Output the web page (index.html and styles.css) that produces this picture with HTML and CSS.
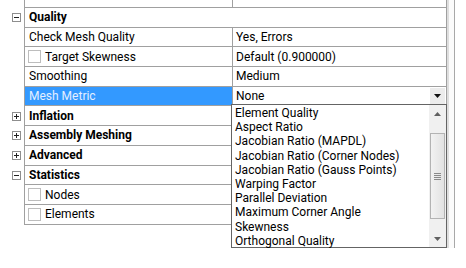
FILE: index.html
```html
<!DOCTYPE html>
<html lang="en">
<head>
  <meta charset="UTF-8" />
  <title>Mesh Details</title>
  <link rel="stylesheet" href="styles.css">
</head>
<body>

  <div class="panel">
    <div class="tree">
      <div class="row stub">
        <div class="gutter"></div>
        <div class="cell label"></div>
        <div class="cell value"></div>
      </div>

      <div class="row head">
        <div class="gutter"><svg class="toggle" width="9" height="9" viewBox="0 0 9 9"><rect x="0.5" y="0.5" width="8" height="8" fill="#fff" stroke="#8e8e8e"/><path d="M2 4.5h5" stroke="#222"/></svg></div>
        <div class="cell title">Quality</div>
      </div>
      <div class="row">
        <div class="gutter"></div>
        <div class="cell label">Check Mesh Quality</div>
        <div class="cell value">Yes, Errors</div>
      </div>
      <div class="row">
        <div class="gutter"></div>
        <div class="cell label"><span class="check"></span>Target Skewness</div>
        <div class="cell value">Default (0.900000)</div>
      </div>
      <div class="row">
        <div class="gutter"></div>
        <div class="cell label">Smoothing</div>
        <div class="cell value">Medium</div>
      </div>
      <div class="row">
        <div class="gutter"></div>
        <div class="cell label selected">Mesh Metric</div>
        <div class="cell value combo">
          <span>None</span>
          <span class="drop-btn"><svg width="7" height="4" viewBox="0 0 7 4"><path d="M0 0h7L3.5 4z" fill="#111"/></svg></span>
        </div>
      </div>

      <div class="row head">
        <div class="gutter"><svg class="toggle" width="9" height="9" viewBox="0 0 9 9"><rect x="0.5" y="0.5" width="8" height="8" fill="#fff" stroke="#8e8e8e"/><path d="M2 4.5h5M4.5 2v5" stroke="#222"/></svg></div>
        <div class="cell title">Inflation</div>
      </div>
      <div class="row head">
        <div class="gutter"><svg class="toggle" width="9" height="9" viewBox="0 0 9 9"><rect x="0.5" y="0.5" width="8" height="8" fill="#fff" stroke="#8e8e8e"/><path d="M2 4.5h5M4.5 2v5" stroke="#222"/></svg></div>
        <div class="cell title">Assembly Meshing</div>
      </div>
      <div class="row head">
        <div class="gutter"><svg class="toggle" width="9" height="9" viewBox="0 0 9 9"><rect x="0.5" y="0.5" width="8" height="8" fill="#fff" stroke="#8e8e8e"/><path d="M2 4.5h5M4.5 2v5" stroke="#222"/></svg></div>
        <div class="cell title">Advanced</div>
      </div>
      <div class="row head">
        <div class="gutter"><svg class="toggle" width="9" height="9" viewBox="0 0 9 9"><rect x="0.5" y="0.5" width="8" height="8" fill="#fff" stroke="#8e8e8e"/><path d="M2 4.5h5" stroke="#222"/></svg></div>
        <div class="cell title">Statistics</div>
      </div>
      <div class="row">
        <div class="gutter"></div>
        <div class="cell label"><span class="check"></span>Nodes</div>
        <div class="cell value"></div>
      </div>
      <div class="row">
        <div class="gutter"></div>
        <div class="cell label"><span class="check"></span>Elements</div>
        <div class="cell value"></div>
      </div>
    </div>

    <div class="edge"></div>

    <!-- open list of the Mesh Metric combo -->
    <div class="dropdown">
      <ul class="options">
        <li>Element Quality</li>
        <li>Aspect Ratio</li>
        <li>Jacobian Ratio (MAPDL)</li>
        <li>Jacobian Ratio (Corner Nodes)</li>
        <li>Jacobian Ratio (Gauss Points)</li>
        <li>Warping Factor</li>
        <li>Parallel Deviation</li>
        <li>Maximum Corner Angle</li>
        <li>Skewness</li>
        <li>Orthogonal Quality</li>
      </ul>
      <div class="scrollbar">
        <div class="sb-btn"><svg width="7" height="4" viewBox="0 0 7 4"><path d="M0 4h7L3.5 0z" fill="#606060"/></svg></div>
        <div class="sb-track">
          <div class="sb-thumb">
            <span></span><span></span><span></span><span></span>
          </div>
        </div>
        <div class="sb-btn"><svg width="7" height="4" viewBox="0 0 7 4"><path d="M0 0h7L3.5 4z" fill="#606060"/></svg></div>
      </div>
    </div>
  </div>

</body>
</html>
```

FILE: styles.css
```css
* {
  margin: 0;
  padding: 0;
  box-sizing: border-box;
}
body {
  background: #fff;
  color: #000;
  font-family: Roboto, "Noto Sans", sans-serif;
  font-size: 12px;
}
.panel {
  position: relative;
  display: flex;
  align-items: flex-start;
}
.tree {
  width: 447px;
}
.row {
  display: flex;
  height: 19.7px;
}
.row.stub {
  height: 8px;
}
.gutter {
  width: 24px;
  display: flex;
  align-items: center;
  padding-left: 12px;
}
.cell {
  display: flex;
  align-items: center;
  border-left: 1px solid #a0a0a0;
  border-bottom: 1px solid #a0a0a0;
  white-space: nowrap;
  overflow: hidden;
}
.label {
  width: 208px;
  padding-left: 4px;
}
.value {
  flex: 1;
  padding-left: 3px;
  border-right: 1px solid #a0a0a0;
}
.title {
  flex: 1;
  padding-left: 4px;
  font-weight: bold;
  border-right: 1px solid #a0a0a0;
}
.selected {
  background: #3399ff;
  color: #e4efff;
}
.check {
  width: 13px;
  height: 13px;
  border: 1px solid #bdbdbd;
  background: #fff;
  margin: 0 4px 0 -1px;
}
.combo {
  justify-content: space-between;
  padding-right: 1px;
}
.drop-btn {
  width: 15px;
  height: 17px;
  background: #ececec;
  display: flex;
  align-items: center;
  justify-content: center;
}

.edge {
  width: 8px;
  height: 248px;
  background: #fbfbfb;
  border-left: 2px solid #dedede;
  border-right: 1px solid #a8a8a8;
}

.dropdown {
  position: absolute;
  left: 231px;
  top: 104px;
  width: 216px;
  height: 144px;
  border: 1px solid #646464;
  background: #fff;
  display: flex;
}
.options {
  flex: 1;
  list-style: none;
  padding: 1px 0 0 3px;
}
.options li {
  height: 14.2px;
  line-height: 14.2px;
  white-space: nowrap;
}
.scrollbar {
  width: 17px;
  background: #f0f0f0;
  display: flex;
  flex-direction: column;
}
.sb-btn {
  height: 17px;
  display: flex;
  align-items: center;
  justify-content: center;
}
.sb-track {
  flex: 1;
  padding: 11px 1px 0;
}
.sb-thumb {
  height: 86px;
  border: 1px solid #b3b3b3;
  background: linear-gradient(90deg, #f2f2f2, #e2e2e2);
  display: flex;
  flex-direction: column;
  justify-content: center;
  align-items: center;
  gap: 1px;
}
.sb-thumb span {
  width: 7px;
  height: 1px;
  background: #8a8a8a;
}
```
